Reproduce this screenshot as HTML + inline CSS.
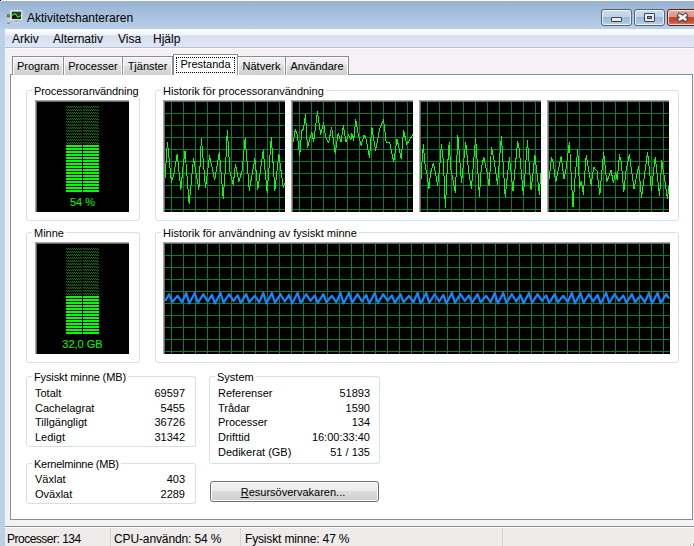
<!DOCTYPE html>
<html><head><meta charset="utf-8">
<style>
*{box-sizing:border-box;margin:0;padding:0}
html,body{width:694px;height:546px;overflow:hidden}
body{position:relative;background:#bad1e8;font-family:"Liberation Sans", sans-serif;font-size:11px;color:#000}
.a{position:absolute}
.t{position:absolute;white-space:pre;line-height:13px;font-size:11px}
.gb{position:absolute;border:1px solid #d5dfe5;border-radius:3px}
.gt{position:absolute;background:#fff;white-space:pre;line-height:13px;font-size:11px;padding:0 2px 0 2px}
.sunk{position:absolute;background:#000;border-top:1px solid #a6a6a6;border-left:1px solid #a6a6a6;box-shadow:inset 1px 1px 0 #6a6a6a}
.tab{position:absolute;top:56px;height:19px;border:1px solid #898c95;border-bottom:none;background:linear-gradient(#f2f2f2 0,#ebebeb 45%,#dddddd 50%,#cfcfcf 100%);box-shadow:inset 1px 1px 0 #fff,inset -1px 0 0 #fff}
.tabt{position:absolute;top:3px;left:0;right:0;text-align:center;white-space:pre;line-height:13px;font-size:11px}
.sb{position:absolute;top:527px;height:19px;font-size:12px;line-height:15px;white-space:pre}
</style></head><body>

<div class="a" style="left:0;top:0;width:694px;height:1px;background:#fbfcfd"></div>
<div class="a" style="left:0;top:1px;width:694px;height:28px;background:linear-gradient(#97b1d0,#b8cfe8)"></div>
<svg class="a" style="left:6px;top:9px" width="18" height="16" viewBox="0 0 18 16">
<rect x="1.2" y="5.3" width="2.6" height="9.4" fill="#cfcfcf"/>
<rect x="1.2" y="5.3" width="2.6" height="3" fill="#4a4a4a"/>
<rect x="1.6" y="6.2" width="1.8" height="1.3" fill="#19e019"/>
<rect x="1.2" y="13.4" width="2.6" height="1.3" fill="#7a7a7a"/>
<rect x="4" y="1" width="12.5" height="10.3" rx="1" fill="#dedcd8"/>
<rect x="5.9" y="2.8" width="9" height="7.1" fill="#101010"/>
<rect x="10" y="3.5" width="4.5" height="1" fill="#555"/>
<rect x="10" y="5" width="4.5" height="1" fill="#444"/>
<polyline points="5.9,6.5 8.6,4.3 12,8.2 15,6.5" fill="none" stroke="#14e014" stroke-width="1.4"/>
<rect x="8.8" y="11.3" width="3.5" height="1.6" fill="#a8a8a8"/>
<rect x="7.3" y="12.9" width="6.4" height="1.8" fill="#cfcfcf"/>
</svg>
<div class="a" style="left:27px;top:11px;font-size:12px;line-height:15px;white-space:pre;color:#000">Aktivitetshanteraren</div>
<div class="a" style="left:601px;top:9px;width:31px;height:17px;border:1px solid #54627a;border-radius:3px;background:linear-gradient(#c8daee 0,#bfd3ea 45%,#9ebad8 50%,#a9c4e0 80%,#c0d6ec 100%);box-shadow:inset 0 0 0 1px rgba(255,255,255,0.75)"><div class="a" style="left:9px;top:7px;width:11px;height:5px;background:#ececec;border:1px solid #3a4150;border-radius:1px"></div></div>
<div class="a" style="left:634px;top:9px;width:31px;height:17px;border:1px solid #54627a;border-radius:3px;background:linear-gradient(#c8daee 0,#bfd3ea 45%,#9ebad8 50%,#a9c4e0 80%,#c0d6ec 100%);box-shadow:inset 0 0 0 1px rgba(255,255,255,0.75)"><div class="a" style="left:9px;top:3px;width:11px;height:9px;background:#ececec;border:1px solid #3a4150;border-radius:1px"><div class="a" style="left:2px;top:2px;width:5px;height:3px;background:#7f9bbd;border:1px solid #3a4150"></div></div></div>
<div class="a" style="left:667px;top:9px;width:45px;height:17px;border:1px solid #5a1d1d;border-radius:3px;background:linear-gradient(#eaa99a 0,#e09585 45%,#c4462b 50%,#c24d33 75%,#d8826e 100%);box-shadow:inset 0 0 0 1px rgba(255,255,255,0.75)"></div>
<svg class="a" style="left:0;top:0" width="694" height="30"><path d="M679.6,15.4 L685.4,19.4 M685.4,15.4 L679.6,19.4" stroke="#3b3f4c" stroke-width="4.6" stroke-linecap="square"/><path d="M679.6,15.4 L685.4,19.4 M685.4,15.4 L679.6,19.4" stroke="#f2f2f2" stroke-width="2.6" stroke-linecap="square"/></svg>
<div class="a" style="left:5px;top:29px;width:689px;height:517px;background:#f5f1f5"></div>
<div class="a" style="left:5px;top:29px;width:689px;height:18px;background:linear-gradient(#fefefe 0,#f6f7fb 4px,#eef1f9 6px,#d6ddef 7px,#dae1f1 10px,#e0e6f5 18px)"></div>
<div class="a" style="left:5px;top:47px;width:689px;height:1px;background:#b8c0d0"></div>
<div class="a" style="left:5px;top:48px;width:689px;height:1px;background:#fdfbfd"></div>
<div class="a" style="left:12px;top:32px;font-size:12px;line-height:15px;white-space:pre">Arkiv</div>
<div class="a" style="left:53px;top:32px;font-size:12px;line-height:15px;white-space:pre">Alternativ</div>
<div class="a" style="left:118px;top:32px;font-size:12px;line-height:15px;white-space:pre">Visa</div>
<div class="a" style="left:153px;top:32px;font-size:12px;line-height:15px;white-space:pre">Hjälp</div>
<div class="a" style="left:10px;top:74px;width:683px;height:446px;border:1px solid #898c95;background:#fff"></div>
<div class="tab" style="left:12px;width:52px"><div class="tabt">Program</div></div>
<div class="tab" style="left:63px;width:60px"><div class="tabt">Processer</div></div>
<div class="tab" style="left:122px;width:51px"><div class="tabt">Tjänster</div></div>
<div class="tab" style="left:237px;width:49px"><div class="tabt">Nätverk</div></div>
<div class="tab" style="left:285px;width:64px"><div class="tabt">Användare</div></div>
<div class="a" style="left:173px;top:54px;width:65px;height:21px;border:1px solid #898c95;border-bottom:none;background:#fff"><div class="a" style="left:2px;top:2px;width:59px;height:16px;border:1px dotted #000"></div><div class="tabt" style="top:3px">Prestanda</div></div>
<div class="gb" style="left:26px;top:90px;width:114px;height:131px"></div><div class="gt" style="left:32px;top:85px;letter-spacing:-0.1px">Processoranvändning</div>
<div class="gb" style="left:155px;top:90px;width:524px;height:131px"></div><div class="gt" style="left:161px;top:85px;letter-spacing:0px">Historik för processoranvändning</div>
<div class="gb" style="left:26px;top:232px;width:114px;height:131px"></div><div class="gt" style="left:32px;top:227px;letter-spacing:0px">Minne</div>
<div class="gb" style="left:155px;top:232px;width:524px;height:131px"></div><div class="gt" style="left:161px;top:227px;letter-spacing:0px">Historik för användning av fysiskt minne</div>
<div class="gb" style="left:26px;top:376px;width:170px;height:71px"></div><div class="gt" style="left:32px;top:371px;letter-spacing:-0.12px">Fysiskt minne (MB)</div>
<div class="gb" style="left:209px;top:376px;width:171px;height:88px"></div><div class="gt" style="left:215px;top:371px;letter-spacing:0px">System</div>
<div class="gb" style="left:26px;top:463px;width:170px;height:41px"></div><div class="gt" style="left:32px;top:458px;letter-spacing:-0.25px">Kernelminne (MB)</div>
<div class="sunk" style="left:35px;top:100px;width:94px;height:112px"></div><svg class="a" style="left:35px;top:100px" width="95" height="112"><defs><pattern id="zzL100" x="1" y="0" width="2" height="3" patternUnits="userSpaceOnUse"><rect x="0" y="0" width="1" height="1" fill="#008000"/><rect x="1" y="1" width="1" height="1" fill="#008000"/></pattern><pattern id="zzR100" x="0" y="0" width="2" height="3" patternUnits="userSpaceOnUse"><rect x="0" y="0" width="1" height="1" fill="#008000"/><rect x="1" y="1" width="1" height="1" fill="#008000"/></pattern></defs><rect x="31" y="6" width="16" height="2" fill="url(#zzL100)"/><rect x="48" y="6" width="16" height="2" fill="url(#zzR100)"/><rect x="31" y="9" width="16" height="2" fill="url(#zzL100)"/><rect x="48" y="9" width="16" height="2" fill="url(#zzR100)"/><rect x="31" y="12" width="16" height="2" fill="url(#zzL100)"/><rect x="48" y="12" width="16" height="2" fill="url(#zzR100)"/><rect x="31" y="15" width="16" height="2" fill="url(#zzL100)"/><rect x="48" y="15" width="16" height="2" fill="url(#zzR100)"/><rect x="31" y="18" width="16" height="2" fill="url(#zzL100)"/><rect x="48" y="18" width="16" height="2" fill="url(#zzR100)"/><rect x="31" y="21" width="16" height="2" fill="url(#zzL100)"/><rect x="48" y="21" width="16" height="2" fill="url(#zzR100)"/><rect x="31" y="24" width="16" height="2" fill="url(#zzL100)"/><rect x="48" y="24" width="16" height="2" fill="url(#zzR100)"/><rect x="31" y="27" width="16" height="2" fill="url(#zzL100)"/><rect x="48" y="27" width="16" height="2" fill="url(#zzR100)"/><rect x="31" y="30" width="16" height="2" fill="url(#zzL100)"/><rect x="48" y="30" width="16" height="2" fill="url(#zzR100)"/><rect x="31" y="33" width="16" height="2" fill="url(#zzL100)"/><rect x="48" y="33" width="16" height="2" fill="url(#zzR100)"/><rect x="31" y="36" width="16" height="2" fill="url(#zzL100)"/><rect x="48" y="36" width="16" height="2" fill="url(#zzR100)"/><rect x="31" y="39" width="16" height="2" fill="url(#zzL100)"/><rect x="48" y="39" width="16" height="2" fill="url(#zzR100)"/><rect x="31" y="42" width="16" height="2" fill="url(#zzL100)"/><rect x="48" y="42" width="16" height="2" fill="url(#zzR100)"/><rect x="31" y="45" width="16" height="2" fill="#00ff00"/><rect x="48" y="45" width="16" height="2" fill="#00ff00"/><rect x="31" y="48" width="16" height="2" fill="#00ff00"/><rect x="48" y="48" width="16" height="2" fill="#00ff00"/><rect x="31" y="51" width="16" height="2" fill="#00ff00"/><rect x="48" y="51" width="16" height="2" fill="#00ff00"/><rect x="31" y="54" width="16" height="2" fill="#00ff00"/><rect x="48" y="54" width="16" height="2" fill="#00ff00"/><rect x="31" y="57" width="16" height="2" fill="#00ff00"/><rect x="48" y="57" width="16" height="2" fill="#00ff00"/><rect x="31" y="60" width="16" height="2" fill="#00ff00"/><rect x="48" y="60" width="16" height="2" fill="#00ff00"/><rect x="31" y="63" width="16" height="2" fill="#00ff00"/><rect x="48" y="63" width="16" height="2" fill="#00ff00"/><rect x="31" y="66" width="16" height="2" fill="#00ff00"/><rect x="48" y="66" width="16" height="2" fill="#00ff00"/><rect x="31" y="69" width="16" height="2" fill="#00ff00"/><rect x="48" y="69" width="16" height="2" fill="#00ff00"/><rect x="31" y="72" width="16" height="2" fill="#00ff00"/><rect x="48" y="72" width="16" height="2" fill="#00ff00"/><rect x="31" y="75" width="16" height="2" fill="#00ff00"/><rect x="48" y="75" width="16" height="2" fill="#00ff00"/><rect x="31" y="78" width="16" height="2" fill="#00ff00"/><rect x="48" y="78" width="16" height="2" fill="#00ff00"/><rect x="31" y="81" width="16" height="2" fill="#00ff00"/><rect x="48" y="81" width="16" height="2" fill="#00ff00"/><rect x="31" y="84" width="16" height="2" fill="#00ff00"/><rect x="48" y="84" width="16" height="2" fill="#00ff00"/><rect x="31" y="87" width="16" height="2" fill="#00ff00"/><rect x="48" y="87" width="16" height="2" fill="#00ff00"/><rect x="31" y="90" width="16" height="2" fill="#00ff00"/><rect x="48" y="90" width="16" height="2" fill="#00ff00"/></svg><div class="a" style="left:35px;top:196px;width:95px;text-align:center;color:#00ff00;font-size:11px;line-height:13px;white-space:pre">54 %</div>
<div class="sunk" style="left:35px;top:242px;width:94px;height:112px"></div><svg class="a" style="left:35px;top:242px" width="95" height="112"><defs><pattern id="zzL242" x="1" y="0" width="2" height="3" patternUnits="userSpaceOnUse"><rect x="0" y="0" width="1" height="1" fill="#008000"/><rect x="1" y="1" width="1" height="1" fill="#008000"/></pattern><pattern id="zzR242" x="0" y="0" width="2" height="3" patternUnits="userSpaceOnUse"><rect x="0" y="0" width="1" height="1" fill="#008000"/><rect x="1" y="1" width="1" height="1" fill="#008000"/></pattern></defs><rect x="31" y="6" width="16" height="2" fill="url(#zzL242)"/><rect x="48" y="6" width="16" height="2" fill="url(#zzR242)"/><rect x="31" y="9" width="16" height="2" fill="url(#zzL242)"/><rect x="48" y="9" width="16" height="2" fill="url(#zzR242)"/><rect x="31" y="12" width="16" height="2" fill="url(#zzL242)"/><rect x="48" y="12" width="16" height="2" fill="url(#zzR242)"/><rect x="31" y="15" width="16" height="2" fill="url(#zzL242)"/><rect x="48" y="15" width="16" height="2" fill="url(#zzR242)"/><rect x="31" y="18" width="16" height="2" fill="url(#zzL242)"/><rect x="48" y="18" width="16" height="2" fill="url(#zzR242)"/><rect x="31" y="21" width="16" height="2" fill="url(#zzL242)"/><rect x="48" y="21" width="16" height="2" fill="url(#zzR242)"/><rect x="31" y="24" width="16" height="2" fill="url(#zzL242)"/><rect x="48" y="24" width="16" height="2" fill="url(#zzR242)"/><rect x="31" y="27" width="16" height="2" fill="url(#zzL242)"/><rect x="48" y="27" width="16" height="2" fill="url(#zzR242)"/><rect x="31" y="30" width="16" height="2" fill="url(#zzL242)"/><rect x="48" y="30" width="16" height="2" fill="url(#zzR242)"/><rect x="31" y="33" width="16" height="2" fill="url(#zzL242)"/><rect x="48" y="33" width="16" height="2" fill="url(#zzR242)"/><rect x="31" y="36" width="16" height="2" fill="url(#zzL242)"/><rect x="48" y="36" width="16" height="2" fill="url(#zzR242)"/><rect x="31" y="39" width="16" height="2" fill="url(#zzL242)"/><rect x="48" y="39" width="16" height="2" fill="url(#zzR242)"/><rect x="31" y="42" width="16" height="2" fill="url(#zzL242)"/><rect x="48" y="42" width="16" height="2" fill="url(#zzR242)"/><rect x="31" y="45" width="16" height="2" fill="url(#zzL242)"/><rect x="48" y="45" width="16" height="2" fill="url(#zzR242)"/><rect x="31" y="48" width="16" height="2" fill="url(#zzL242)"/><rect x="48" y="48" width="16" height="2" fill="url(#zzR242)"/><rect x="31" y="51" width="16" height="2" fill="url(#zzL242)"/><rect x="48" y="51" width="16" height="2" fill="url(#zzR242)"/><rect x="31" y="54" width="16" height="2" fill="#00ff00"/><rect x="48" y="54" width="16" height="2" fill="#00ff00"/><rect x="31" y="57" width="16" height="2" fill="#00ff00"/><rect x="48" y="57" width="16" height="2" fill="#00ff00"/><rect x="31" y="60" width="16" height="2" fill="#00ff00"/><rect x="48" y="60" width="16" height="2" fill="#00ff00"/><rect x="31" y="63" width="16" height="2" fill="#00ff00"/><rect x="48" y="63" width="16" height="2" fill="#00ff00"/><rect x="31" y="66" width="16" height="2" fill="#00ff00"/><rect x="48" y="66" width="16" height="2" fill="#00ff00"/><rect x="31" y="69" width="16" height="2" fill="#00ff00"/><rect x="48" y="69" width="16" height="2" fill="#00ff00"/><rect x="31" y="72" width="16" height="2" fill="#00ff00"/><rect x="48" y="72" width="16" height="2" fill="#00ff00"/><rect x="31" y="75" width="16" height="2" fill="#00ff00"/><rect x="48" y="75" width="16" height="2" fill="#00ff00"/><rect x="31" y="78" width="16" height="2" fill="#00ff00"/><rect x="48" y="78" width="16" height="2" fill="#00ff00"/><rect x="31" y="81" width="16" height="2" fill="#00ff00"/><rect x="48" y="81" width="16" height="2" fill="#00ff00"/><rect x="31" y="84" width="16" height="2" fill="#00ff00"/><rect x="48" y="84" width="16" height="2" fill="#00ff00"/><rect x="31" y="87" width="16" height="2" fill="#00ff00"/><rect x="48" y="87" width="16" height="2" fill="#00ff00"/><rect x="31" y="90" width="16" height="2" fill="#00ff00"/><rect x="48" y="90" width="16" height="2" fill="#00ff00"/></svg><div class="a" style="left:35px;top:338px;width:95px;text-align:center;color:#00ff00;font-size:11px;line-height:13px;white-space:pre">32,0 GB</div>
<div class="sunk" style="left:163px;top:100px;width:122px;height:112px"></div><svg class="a" style="left:0;top:0" width="694" height="546"><g fill="#008040"><rect x="171" y="102" width="1" height="110"/><rect x="183" y="102" width="1" height="110"/><rect x="195" y="102" width="1" height="110"/><rect x="207" y="102" width="1" height="110"/><rect x="219" y="102" width="1" height="110"/><rect x="231" y="102" width="1" height="110"/><rect x="243" y="102" width="1" height="110"/><rect x="255" y="102" width="1" height="110"/><rect x="267" y="102" width="1" height="110"/><rect x="279" y="102" width="1" height="110"/><rect x="165" y="113" width="120" height="1"/><rect x="165" y="125" width="120" height="1"/><rect x="165" y="137" width="120" height="1"/><rect x="165" y="149" width="120" height="1"/><rect x="165" y="161" width="120" height="1"/><rect x="165" y="173" width="120" height="1"/><rect x="165" y="185" width="120" height="1"/><rect x="165" y="197" width="120" height="1"/><rect x="165" y="209" width="120" height="1"/></g><polyline points="165.0,178.0 167.4,142.3 169.2,160.2 171.5,182.1 174.0,173.4 177.2,154.3 180.9,189.5 182.8,169.0 185.0,150.6 189.2,204.0 193.5,158.4 198.9,189.5 201.4,138.2 205.5,188.0 209.6,155.8 214.6,180.0 219.4,152.1 223.2,198.3 225.6,166.0 227.3,130.1 230.0,171.9 233.2,185.0 235.4,164.6 239.0,181.4 242.0,171.2 245.2,138.2 249.3,190.2 254.9,158.7 257.8,189.5 263.2,150.6 267.2,192.4 271.3,137.5 274.9,190.2 278.9,154.3 283.3,188.0 284.7,182.9" fill="none" stroke="#00ff00" stroke-width="1" stroke-linejoin="round" shape-rendering="crispEdges"/></svg>
<div class="sunk" style="left:291px;top:100px;width:122px;height:112px"></div><svg class="a" style="left:0;top:0" width="694" height="546"><g fill="#008040"><rect x="299" y="102" width="1" height="110"/><rect x="311" y="102" width="1" height="110"/><rect x="323" y="102" width="1" height="110"/><rect x="335" y="102" width="1" height="110"/><rect x="347" y="102" width="1" height="110"/><rect x="359" y="102" width="1" height="110"/><rect x="371" y="102" width="1" height="110"/><rect x="383" y="102" width="1" height="110"/><rect x="395" y="102" width="1" height="110"/><rect x="407" y="102" width="1" height="110"/><rect x="293" y="113" width="120" height="1"/><rect x="293" y="125" width="120" height="1"/><rect x="293" y="137" width="120" height="1"/><rect x="293" y="149" width="120" height="1"/><rect x="293" y="161" width="120" height="1"/><rect x="293" y="173" width="120" height="1"/><rect x="293" y="185" width="120" height="1"/><rect x="293" y="197" width="120" height="1"/><rect x="293" y="209" width="120" height="1"/></g><polyline points="293.1,142.0 295.3,129.7 297.2,134.6 299.7,155.2 301.9,130.5 303.5,128.8 305.5,114.8 307.5,147.8 309.1,141.2 311.8,132.1 313.7,142.0 317.4,111.5 320.7,134.6 323.6,122.3 325.6,137.1 328.6,142.9 331.6,127.2 335.2,153.6 338.2,133.0 341.0,142.0 343.4,125.5 345.9,142.0 348.4,134.6 350.9,139.6 351.7,133.0 353.6,140.4 355.8,119.8 358.3,134.6 361.2,145.3 364.0,135.4 365.7,137.1 369.5,157.7 371.8,127.2 375.6,150.3 379.7,128.8 383.5,119.8 386.3,142.9 389.6,142.0 393.7,161.8 397.0,138.7 401.2,158.5 403.6,130.5 406.9,144.5 412.7,134.6" fill="none" stroke="#00ff00" stroke-width="1" stroke-linejoin="round" shape-rendering="crispEdges"/></svg>
<div class="sunk" style="left:419px;top:100px;width:122px;height:112px"></div><svg class="a" style="left:0;top:0" width="694" height="546"><g fill="#008040"><rect x="427" y="102" width="1" height="110"/><rect x="439" y="102" width="1" height="110"/><rect x="451" y="102" width="1" height="110"/><rect x="463" y="102" width="1" height="110"/><rect x="475" y="102" width="1" height="110"/><rect x="487" y="102" width="1" height="110"/><rect x="499" y="102" width="1" height="110"/><rect x="511" y="102" width="1" height="110"/><rect x="523" y="102" width="1" height="110"/><rect x="535" y="102" width="1" height="110"/><rect x="421" y="113" width="120" height="1"/><rect x="421" y="125" width="120" height="1"/><rect x="421" y="137" width="120" height="1"/><rect x="421" y="149" width="120" height="1"/><rect x="421" y="161" width="120" height="1"/><rect x="421" y="173" width="120" height="1"/><rect x="421" y="185" width="120" height="1"/><rect x="421" y="197" width="120" height="1"/><rect x="421" y="209" width="120" height="1"/></g><polyline points="421.1,179.4 421.6,167.0 423.3,144.8 425.2,166.2 426.9,173.6 428.9,188.5 430.5,173.6 433.2,162.9 434.8,169.5 437.6,185.2 439.3,172.0 441.4,144.4 443.4,161.3 445.4,207.4 447.0,174.4 449.2,142.3 450.8,168.7 452.5,177.7 455.3,192.6 457.9,135.7 461.5,182.7 465.7,142.3 468.5,170.3 471.4,188.5 475.6,138.2 478.9,187.6 479.3,196.7 481.3,167.9 483.8,157.1 487.1,172.8 489.2,186.0 491.5,147.3 493.7,158.0 497.5,184.3 501.4,136.5 505.2,196.7 509.4,157.1 513.0,190.9 517.6,141.5 519.3,149.7 523.4,195.0 527.5,140.7 531.1,190.1 534.9,155.5 539.4,194.2 540.7,172.8" fill="none" stroke="#00ff00" stroke-width="1" stroke-linejoin="round" shape-rendering="crispEdges"/></svg>
<div class="sunk" style="left:547px;top:100px;width:122px;height:112px"></div><svg class="a" style="left:0;top:0" width="694" height="546"><g fill="#008040"><rect x="555" y="102" width="1" height="110"/><rect x="567" y="102" width="1" height="110"/><rect x="579" y="102" width="1" height="110"/><rect x="591" y="102" width="1" height="110"/><rect x="603" y="102" width="1" height="110"/><rect x="615" y="102" width="1" height="110"/><rect x="627" y="102" width="1" height="110"/><rect x="639" y="102" width="1" height="110"/><rect x="651" y="102" width="1" height="110"/><rect x="663" y="102" width="1" height="110"/><rect x="549" y="113" width="120" height="1"/><rect x="549" y="125" width="120" height="1"/><rect x="549" y="137" width="120" height="1"/><rect x="549" y="149" width="120" height="1"/><rect x="549" y="161" width="120" height="1"/><rect x="549" y="173" width="120" height="1"/><rect x="549" y="185" width="120" height="1"/><rect x="549" y="197" width="120" height="1"/><rect x="549" y="209" width="120" height="1"/></g><polyline points="549.1,179.4 551.6,157.1 553.2,162.9 555.7,181.9 557.4,174.4 561.2,156.3 564.0,178.6 565.6,172.0 569.4,142.3 573.0,207.4 574.7,181.0 577.7,149.7 579.6,187.6 581.3,181.0 583.3,194.2 586.2,155.5 591.2,185.2 593.7,167.0 597.0,171.2 599.8,195.0 603.6,152.2 606.8,181.9 611.0,170.3 613.4,182.7 615.6,172.8 617.2,179.4 619.5,154.7 621.2,161.3 623.8,191.8 626.1,170.3 629.4,154.7 634.0,188.5 638.7,166.2 641.5,197.5 647.6,152.2 651.4,190.1 655.2,157.1 659.6,195.9 661.8,160.4 667.4,198.3 669.0,186.0" fill="none" stroke="#00ff00" stroke-width="1" stroke-linejoin="round" shape-rendering="crispEdges"/></svg>
<div class="sunk" style="left:163px;top:242px;width:507px;height:112px"></div><svg class="a" style="left:0;top:0" width="694" height="546"><g fill="#008040"><rect x="171" y="244" width="1" height="110"/><rect x="183" y="244" width="1" height="110"/><rect x="195" y="244" width="1" height="110"/><rect x="207" y="244" width="1" height="110"/><rect x="219" y="244" width="1" height="110"/><rect x="231" y="244" width="1" height="110"/><rect x="243" y="244" width="1" height="110"/><rect x="255" y="244" width="1" height="110"/><rect x="267" y="244" width="1" height="110"/><rect x="279" y="244" width="1" height="110"/><rect x="291" y="244" width="1" height="110"/><rect x="303" y="244" width="1" height="110"/><rect x="315" y="244" width="1" height="110"/><rect x="327" y="244" width="1" height="110"/><rect x="339" y="244" width="1" height="110"/><rect x="351" y="244" width="1" height="110"/><rect x="363" y="244" width="1" height="110"/><rect x="375" y="244" width="1" height="110"/><rect x="387" y="244" width="1" height="110"/><rect x="399" y="244" width="1" height="110"/><rect x="411" y="244" width="1" height="110"/><rect x="423" y="244" width="1" height="110"/><rect x="435" y="244" width="1" height="110"/><rect x="447" y="244" width="1" height="110"/><rect x="459" y="244" width="1" height="110"/><rect x="471" y="244" width="1" height="110"/><rect x="483" y="244" width="1" height="110"/><rect x="495" y="244" width="1" height="110"/><rect x="507" y="244" width="1" height="110"/><rect x="519" y="244" width="1" height="110"/><rect x="531" y="244" width="1" height="110"/><rect x="543" y="244" width="1" height="110"/><rect x="555" y="244" width="1" height="110"/><rect x="567" y="244" width="1" height="110"/><rect x="579" y="244" width="1" height="110"/><rect x="591" y="244" width="1" height="110"/><rect x="603" y="244" width="1" height="110"/><rect x="615" y="244" width="1" height="110"/><rect x="627" y="244" width="1" height="110"/><rect x="639" y="244" width="1" height="110"/><rect x="651" y="244" width="1" height="110"/><rect x="663" y="244" width="1" height="110"/><rect x="165" y="255" width="505" height="1"/><rect x="165" y="267" width="505" height="1"/><rect x="165" y="279" width="505" height="1"/><rect x="165" y="291" width="505" height="1"/><rect x="165" y="303" width="505" height="1"/><rect x="165" y="315" width="505" height="1"/><rect x="165" y="327" width="505" height="1"/><rect x="165" y="339" width="505" height="1"/><rect x="165" y="351" width="505" height="1"/></g><polyline points="165.2,300.9 169.1,294.2 172.1,302.2 177.7,295.8 182.0,302.2 186.2,293.0 189.2,303.4 194.8,293.0 197.8,302.8 203.4,294.2 207.7,301.5 211.9,294.8 214.9,303.4 220.5,293.0 223.5,302.8 229.1,294.2 233.4,300.9 237.7,295.4 240.7,302.8 246.2,294.2 249.2,302.2 254.8,295.8 259.1,302.2 263.4,293.0 266.4,303.4 271.9,293.0 274.9,302.8 280.5,294.2 284.8,301.5 289.1,294.8 292.1,303.4 297.6,293.0 300.6,302.8 306.2,294.2 310.5,300.9 314.8,295.4 317.8,302.8 323.4,294.2 326.4,302.2 331.9,295.8 336.2,302.2 340.5,293.0 343.5,303.4 349.1,293.0 352.1,302.8 357.6,294.2 361.9,301.5 366.2,294.8 369.2,303.4 374.8,293.0 377.8,302.8 383.3,294.2 387.6,300.9 391.9,295.4 394.9,302.8 400.5,294.2 403.5,302.2 409.1,295.8 413.4,302.2 417.6,293.0 420.6,303.4 426.2,293.0 429.2,302.8 434.8,294.2 439.1,301.5 443.3,294.8 446.3,303.4 451.9,293.0 454.9,302.8 460.5,294.2 464.8,300.9 469.0,295.4 472.0,302.8 477.6,294.2 480.6,302.2 486.2,295.8 490.5,302.2 494.8,293.0 497.8,303.4 503.3,293.0 506.3,302.8 511.9,294.2 516.2,301.5 520.5,294.8 523.5,303.4 529.0,293.0 532.0,302.8 537.6,294.2 541.9,300.9 546.2,295.4 549.2,302.8 554.8,294.2 557.8,302.2 563.3,295.8 567.6,302.2 571.9,293.0 574.9,303.4 580.5,293.0 583.5,302.8 589.0,294.2 593.3,301.5 597.6,294.8 600.6,303.4 606.2,293.0 609.2,302.8 614.7,294.2 619.0,300.9 623.3,295.4 626.3,302.8 631.9,294.2 634.9,302.2 640.5,295.8 644.8,302.2 649.0,293.0 652.0,303.4 657.6,293.0 660.6,302.8 666.2,294.2 669.0,298.5" fill="none" stroke="#1688ff" stroke-width="2.2" stroke-linejoin="round"/></svg>
<div class="t" style="left:35px;top:387px">Totalt</div><div class="t" style="left:85px;width:100px;text-align:right;top:387px">69597</div>
<div class="t" style="left:35px;top:402px">Cachelagrat</div><div class="t" style="left:85px;width:100px;text-align:right;top:402px">5455</div>
<div class="t" style="left:35px;top:416px">Tillgängligt</div><div class="t" style="left:85px;width:100px;text-align:right;top:416px">36726</div>
<div class="t" style="left:35px;top:431px">Ledigt</div><div class="t" style="left:85px;width:100px;text-align:right;top:431px">31342</div>
<div class="t" style="left:218px;top:387px">Referenser</div><div class="t" style="left:270px;width:100px;text-align:right;top:387px">51893</div>
<div class="t" style="left:218px;top:402px">Trådar</div><div class="t" style="left:270px;width:100px;text-align:right;top:402px">1590</div>
<div class="t" style="left:218px;top:416px">Processer</div><div class="t" style="left:270px;width:100px;text-align:right;top:416px">134</div>
<div class="t" style="left:218px;top:431px">Drifttid</div><div class="t" style="left:270px;width:100px;text-align:right;top:431px">16:00:33:40</div>
<div class="t" style="left:218px;top:446px">Dedikerat (GB)</div><div class="t" style="left:270px;width:100px;text-align:right;top:446px">51 / 135</div>
<div class="t" style="left:35px;top:473px">Växlat</div><div class="t" style="left:85px;width:100px;text-align:right;top:473px">403</div>
<div class="t" style="left:35px;top:488px">Oväxlat</div><div class="t" style="left:85px;width:100px;text-align:right;top:488px">2289</div>
<div class="a" style="left:210px;top:481px;width:169px;height:21px;border:1px solid #707070;border-radius:3px;background:linear-gradient(#f2f2f2 0,#ebebeb 48%,#dddddd 50%,#cfcfcf 100%);box-shadow:inset 0 0 0 1px #fcfcfc"><div class="tabt" style="top:4px;left:-3px"><u>R</u>esursövervakaren...</div></div>
<div class="a" style="left:5px;top:526px;width:689px;height:1px;background:#8f8f8f"></div>
<div class="a" style="left:5px;top:527px;width:689px;height:19px;background:#efebeb;border-top:1px solid #fdfdfd"></div>
<svg class="a" style="left:684px;top:536px" width="10" height="10"><g fill="#fff"><rect x="8" y="6" width="1" height="1"/><rect x="5" y="9" width="1" height="1"/><rect x="8" y="9" width="1" height="1"/></g><g fill="#a0a0a0"><rect x="9" y="7" width="1" height="2"/><rect x="6" y="9" width="1" height="1"/><rect x="9" y="9" width="1" height="1"/></g></svg>
<div class="a" style="left:110px;top:528px;width:1px;height:18px;background:#d5d5d5"></div>
<div class="a" style="left:240px;top:528px;width:1px;height:18px;background:#d5d5d5"></div>
<div class="a" style="left:502px;top:528px;width:1px;height:18px;background:#d5d5d5"></div>
<div class="sb" style="left:7px;top:532px;letter-spacing:-0.5px">Processer: 134</div>
<div class="sb" style="left:114px;top:532px;letter-spacing:-0.12px">CPU-användn: 54 %</div>
<div class="sb" style="left:245px;top:532px;letter-spacing:-0.16px">Fysiskt minne: 47 %</div>
<div class="a" style="left:0;top:0;width:1px;height:1px;background:#000"></div><div class="a" style="left:0;top:1px;width:1px;height:1px;background:#f4f6f9"></div>
</body></html>
